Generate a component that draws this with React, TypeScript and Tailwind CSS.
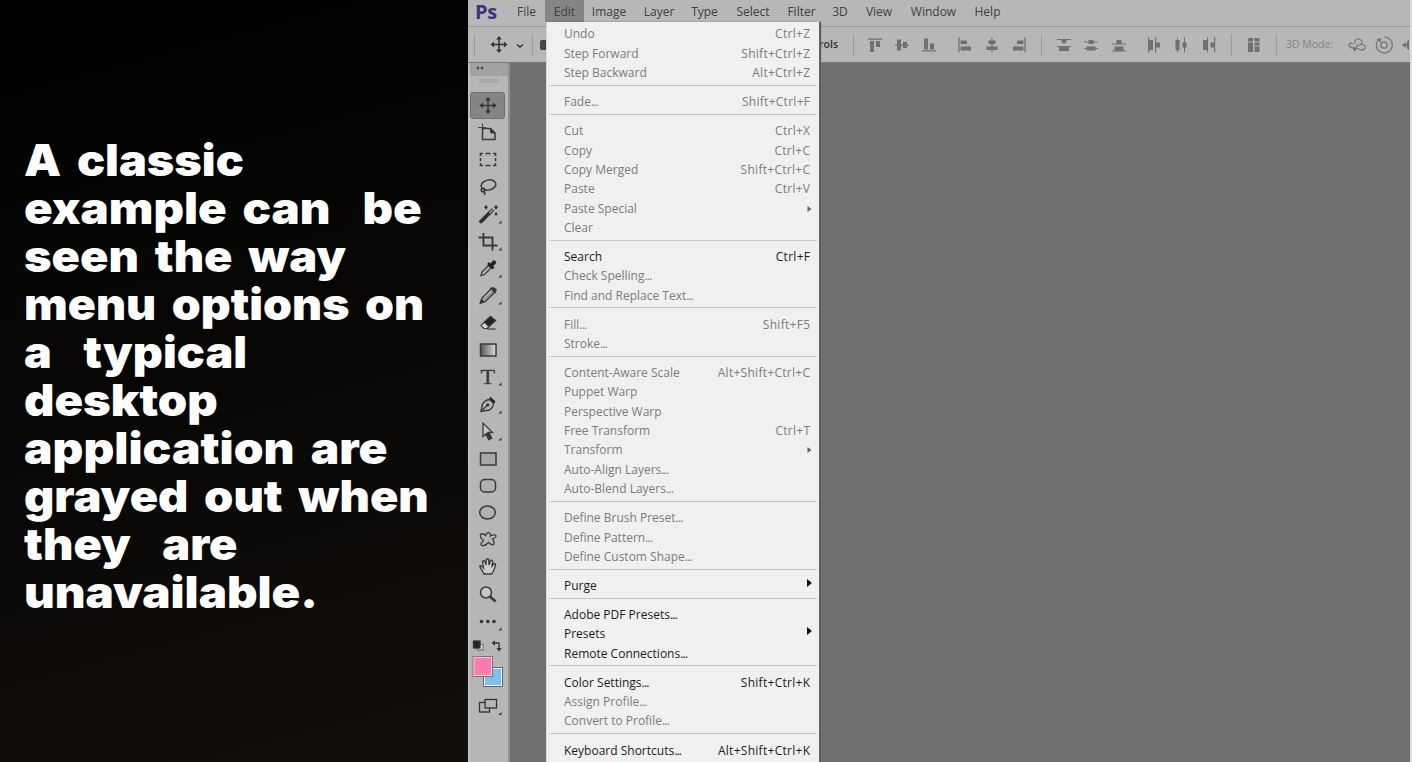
import React from "react";

type Item = { label: string; keys?: string; sub?: boolean; on?: boolean };

const GROUPS: Item[][] = [
  [
    { label: "Undo", keys: "Ctrl+Z" },
    { label: "Step Forward", keys: "Shift+Ctrl+Z" },
    { label: "Step Backward", keys: "Alt+Ctrl+Z" },
  ],
  [{ label: "Fade...", keys: "Shift+Ctrl+F" }],
  [
    { label: "Cut", keys: "Ctrl+X" },
    { label: "Copy", keys: "Ctrl+C" },
    { label: "Copy Merged", keys: "Shift+Ctrl+C" },
    { label: "Paste", keys: "Ctrl+V" },
    { label: "Paste Special", sub: true },
    { label: "Clear" },
  ],
  [
    { label: "Search", keys: "Ctrl+F", on: true },
    { label: "Check Spelling..." },
    { label: "Find and Replace Text..." },
  ],
  [{ label: "Fill...", keys: "Shift+F5" }, { label: "Stroke..." }],
  [
    { label: "Content-Aware Scale", keys: "Alt+Shift+Ctrl+C" },
    { label: "Puppet Warp" },
    { label: "Perspective Warp" },
    { label: "Free Transform", keys: "Ctrl+T" },
    { label: "Transform", sub: true },
    { label: "Auto-Align Layers..." },
    { label: "Auto-Blend Layers..." },
  ],
  [{ label: "Define Brush Preset..." }, { label: "Define Pattern..." }, { label: "Define Custom Shape..." }],
  [{ label: "Purge", sub: true, on: true }],
  [
    { label: "Adobe PDF Presets...", on: true },
    { label: "Presets", sub: true, on: true },
    { label: "Remote Connections...", on: true },
  ],
  [
    { label: "Color Settings...", keys: "Shift+Ctrl+K", on: true },
    { label: "Assign Profile..." },
    { label: "Convert to Profile..." },
  ],
  [{ label: "Keyboard Shortcuts...", keys: "Alt+Shift+Ctrl+K", on: true }],
];

const HEADING: [string, string][] = [
  ["A classic", "scale-x-[1.063]"],
  ["example can  be", "scale-x-[1.076]"],
  ["seen the way", "scale-x-[1.066]"],
  ["menu options on", "scale-x-[1.055]"],
  ["a  typical", "scale-x-[1.062]"],
  ["desktop", "scale-x-[1.072]"],
  ["application are", "scale-x-[1.087]"],
  ["grayed out when", "scale-x-[1.066]"],
  ["they  are", "scale-x-[1.065]"],
  ["unavailable.", "scale-x-[1.078]"],
];

const MENUS: [string, string][] = [
  ["File", "w-[37px]"],
  ["Edit", "w-[39px] bg-[#858585]"],
  ["Image", "w-[50px]"],
  ["Layer", "w-[50px]"],
  ["Type", "w-[41px]"],
  ["Select", "w-[56px]"],
  ["Filter", "w-[41px]"],
  ["3D", "w-[36px]"],
  ["View", "w-[42px]"],
  ["Window", "w-[67px]"],
  ["Help", "w-[41px]"],
];

function EditMenu() {
  return (
    <div className="absolute left-[78px] top-[22px] h-[740px] w-[273px] overflow-hidden border-l border-[#d8d8d8] bg-[#f0f0f0] pt-[2.2px] text-[12px] shadow-[2px_0_1px_#606060]">
      {GROUPS.map((group, g) => (
        <div key={g}>
          {g > 0 && (
            <div className="h-[9.73px] pt-[2.5px] pl-[2px] pr-[2px]">
              <div className="h-px bg-[#c8c8c8]" />
            </div>
          )}
          {group.map((item) => (
            <div
              key={item.label}
              className={
                "flex h-[19.35px] items-center justify-between pt-px pl-[17px] pr-[9px] leading-none whitespace-pre " +
                (item.on ? "text-[#1c1c1c]" : "text-[#7c7c7c]")
              }
            >
              <span>
                {item.label.endsWith("...") ? (
                  <>
                    {item.label.slice(0, -3)}
                    <span className="tracking-[-0.8px]">...</span>
                  </>
                ) : (
                  item.label
                )}
              </span>
              {item.keys && <span className="mr-[-0.3px] tracking-[0.28px]">{item.keys}</span>}
              {item.sub && (
                <svg
                  className={item.on ? "mr-[-2px] mb-[6px]" : "mr-[-2px]"}
                  width="5"
                  height="8"
                  viewBox="0 0 5 8"
                  fill={item.on ? "#111" : "#666"}
                >
                  <path d={item.on ? "M0 0L5 4L0 8Z" : "M0.5 1L4.5 4L0.5 7Z"} />
                </svg>
              )}
            </div>
          ))}
        </div>
      ))}
    </div>
  );
}

const MOVE = (
  <>
    <path d="M18 7V20M11.5 13.5H24.5" />
    <path d="M18 5l3 3.6h-6zM18 22l3-3.6h-6zM9.5 13.5l3.6-3v6zM26.500 13.5l-3.6-3v6z" fill="#333" stroke="none" />
  </>
);

const TOOLS: React.ReactNode[] = [
  MOVE,
  <>
    <path d="M12.500 9.500H20.500L25 14V20.500H12.500Z" />
    <path d="M8 8.500H16M12.500 4.500V12" strokeWidth="0.900" />
    <path d="M20 9L25.500 14.500H21L20 13Z" fill="#333" stroke="none" />
  </>,
  <path d="M10.500 10V7.500H13M15.500 7.500H20.500M23 7.500H25.500V10M25.500 12V15M25.500 17V19.500H23M20.500 19.500H15.500M13 19.500H10.500V17M10.500 15V12" />,
  <>
    <ellipse cx="18.500" cy="12" rx="7.500" ry="5" transform="rotate(-12 18.500 12)" />
    <circle cx="13" cy="17" r="1.800" />
    <path d="M13.500 18.500Q15.500 19.500 14.500 22" />
  </>,
  <>
    <path d="M11 20.500L20 11.500" strokeWidth="3.800" stroke="#2e2e2e" strokeLinecap="round" />
    <path d="M20 11.500L23 8.500" strokeWidth="3.400" stroke="#2e2e2e" />
    <path d="M19.500 12L22.500 9" strokeWidth="1.400" stroke="#b0b0b0" />
    <path d="M16 4l2 2.300l-2 2.300l-2-2.300zM26 4l2 2.300l-2 2.300l-2-2.300zM26 11l1.600 2l-1.600 2l-1.600-2z" fill="#333" stroke="none" />
  </>,
  <>
    <path d="M8.500 9.500H22.500V22.500M13.500 5V17.500H27.500" strokeWidth="1.900" />
  </>,
  <>
    <path d="M11 20.500L12 17L18.500 10.500L21 13L14.500 19.500Z" strokeWidth="1.300" />
    <path d="M17 9L19 7L20.500 8.500L22.500 6Q24 4.500 25.500 6Q27 7.500 25.500 9L23 11L24.500 12.500L22.500 14.500Z" fill="#222" stroke="none" />
  </>,
  <>
    <path d="M10.500 21L12 16L21.500 6.500Q23 5.500 24.500 7Q26 8.500 25 10L15.500 19.500Z" strokeWidth="1.300" fill="#999" />
    <path d="M13.500 16.500L22 8" strokeWidth="0.900" stroke="#ccc" />
    <path d="M21 6.500L25 10.500L26 8Q24 5 21 6.500ZM10.500 21L11.500 18L13.500 20Z" fill="#333" />
  </>,
  <>
    <path d="M11 16.500L14.500 13L19 17.500L17 19.500H14Z" fill="#ddd" strokeWidth="1.200" />
    <path d="M14.500 13L20.500 7.500L25.500 11.500L19 17.500Z" fill="#222" />
    <path d="M17 20H25.500" strokeWidth="1.200" />
  </>,
  <>
    <defs>
      <linearGradient id="toolGrad">
        <stop offset="0" stopColor="#555" />
        <stop offset="1" stopColor="#ddd" />
      </linearGradient>
    </defs>
    <rect x="10.500" y="8" width="15.500" height="12" fill="url(#toolGrad)" />
  </>,
  <text x="10.500" y="20.500" fontSize="21" fill="#3b3b3b" stroke="#3b3b3b" strokeWidth="0.300" fontFamily="Liberation Serif, serif" textLength="14.500" lengthAdjust="spacingAndGlyphs">T</text>,
  <>
    <path d="M11 20.500L12.500 13Q15 9 19.500 8.500L23.500 12Q23.500 16 19.500 19Z" strokeWidth="1.400" />
    <path d="M11 20.500L17 14.500" strokeWidth="1.200" />
    <path d="M20 5.500L25.500 10.500L24 12.500L19.500 8Z" fill="#222" stroke="none" />
    <circle cx="17.800" cy="13.800" r="1.600" fill="#333" stroke="none" />
  </>,
  <>
    <path d="M13 5V18.500L16 16L19 21.500L21.500 20L18.500 14.500H22.500Z" strokeWidth="1.300" fill="#c8c8c8" />
    <path d="M18.500 14.500L21.500 20L19 21.500L16 16Z" fill="#333" />
  </>,
  <rect x="10.500" y="8" width="15.500" height="12" fill="#a8a8a8" />,
  <rect x="10.500" y="7.500" width="15" height="12.500" rx="4" fill="#b0b0b0" />,
  <ellipse cx="17.500" cy="13.500" rx="7.800" ry="6.500" fill="#b0b0b0" />,
  <path d="M10.500 8.500Q13 6.500 15.500 9.500Q17.500 5.500 19.500 7Q21 8.500 20.500 10Q24 8 26 9.500Q26.500 11.500 22.500 13Q24.500 15 24 18Q22.500 20 18.500 16.500Q15 20.500 11.500 19.500Q10 17.500 13.500 14.500Q9.500 11.500 10.500 8.500Z" strokeWidth="1.300" />,
  <>
    <path d="M14 20.500Q10.500 15.500 9.800 13Q10.500 11.500 13.500 15L12.500 8.500Q13.500 7 15 8.500L16 12L16.300 6.500Q17.500 5 18.700 6.500L19 12L20.500 7.500Q22 6.500 22.600 8L22 13L24 10.500Q25.800 10.500 25.500 12.500L23.500 18L21.500 21H14Z" fill="#ccc" strokeWidth="1.300" />
  </>,
  <>
    <circle cx="16" cy="11.500" r="5.500" fill="#c8c8c8" />
    <path d="M20 15.500L25.500 20.500" strokeWidth="2.600" />
  </>,
  <>
    <circle cx="11.500" cy="13.500" r="1.800" fill="#333" stroke="none" />
    <circle cx="17.800" cy="13.500" r="1.800" fill="#333" stroke="none" />
    <circle cx="24" cy="13.500" r="1.800" fill="#333" stroke="none" />
  </>,
];

const FLYOUT = [4, 5, 6, 7, 10, 11, 12, 19];

function Toolbar() {
  return (
    <div className="flex w-[42px] shrink-0 flex-col border-l-2 border-r-2 border-l-[#c2c2c2] border-r-[#909090] bg-[#b6b6b6]">
      <div className="h-[13px] shrink-0 bg-[#a2a2a2] pl-[6px]">
        <svg width="8" height="12" viewBox="0 0 8 12" fill="#444">
          <path d="M0 5L3 3V7ZM4 5L7 3V7Z" />
        </svg>
      </div>
      <div className="flex h-[16px] shrink-0 justify-center pt-[3px]">
        <div className="h-[4px] w-[20px] bg-[#aaaaaa]" />
      </div>
      {TOOLS.map((tool, i) => (
        <div key={i} className="flex h-[27.15px] shrink-0 items-center">
          <div className={i === 0 ? "h-[27px] w-[35px] rounded-[3px] border border-[#707070] bg-[#858585]" : "h-[27px] w-[35px]"}>
            <svg
              className={i === 0 ? "mt-[-1px] ml-[-1px] overflow-visible" : "overflow-visible"}
              width="36"
              height="27"
              viewBox="0 0 36 27"
              fill="none"
              stroke="#3a3a3a"
              strokeWidth="1.500"
            >
              {tool}
              {FLYOUT.includes(i) && <path d="M31.500 19.500V22.500H28.500Z" fill="#333" stroke="none" />}
            </svg>
          </div>
        </div>
      ))}
      <svg className="shrink-0" width="38" height="86" viewBox="0 0 38 86" fill="none" stroke="#333" strokeWidth="1.300">
        <rect x="7.500" y="9.500" width="5.500" height="5.500" fill="#eee" stroke="#777" />
        <rect x="3.500" y="6" width="6.500" height="7" fill="#222" />
        <path d="M24.500 8H29V14" />
        <path d="M21.500 8L25 5.300V10.700ZM29 16.500L26.300 13H31.700Z" fill="#333" stroke="none" />
        <rect x="13.500" y="32.500" width="19" height="19" fill="#7dbfee" stroke="#666" strokeWidth="1" />
        <rect x="14.500" y="33.500" width="17" height="17" stroke="#f2f2f2" strokeWidth="1" />
        <rect x="3" y="21.500" width="19.500" height="20" fill="#fc7cb0" stroke="#777" strokeWidth="1" />
        <rect x="4" y="22.500" width="17.500" height="18" stroke="#f7c4d8" strokeWidth="1" />
        <rect x="9.500" y="67.500" width="10" height="9.500" />
        <rect x="15" y="64.500" width="11.500" height="8.500" fill="#b6b6b6" />
        <path d="M31.500 77V80H28.500Z" fill="#333" stroke="none" />
      </svg>
    </div>
  );
}

function Opt({ cls, children }: { cls: string; children: React.ReactNode }) {
  return (
    <div className={"flex shrink-0 items-center justify-center " + cls}>
      <svg className="shrink-0" width="18" height="18" viewBox="0 0 18 18" fill="#707070" stroke="#757575" strokeWidth="0">
        {children}
      </svg>
    </div>
  );
}

const Bar = () => <div className="h-[22px] w-px shrink-0 bg-[#9c9c9c]" />;

function OptionsBar() {
  return (
    <div className="flex h-[36px] shrink-0 items-center overflow-hidden border-t border-[#9c9c9c] bg-[#b7b7b7]">
      <div className="w-[6px] shrink-0" />
      <Bar />
      <div className="flex w-[57px] shrink-0 items-center pl-[6px]">
        <svg width="36" height="27" viewBox="0 0 36 27" stroke="#333" strokeWidth="1.500" fill="none">
          {MOVE}
        </svg>
        <svg className="ml-[-1px] mt-[2px]" width="8" height="6" viewBox="0 0 8 6" stroke="#333" strokeWidth="1.500" fill="none">
          <path d="M1 1.500L4 4L7 1.500" />
        </svg>
      </div>
      <Bar />
      <div className="ml-[7px] h-[10px] w-[10px] shrink-0 rounded-[2px] bg-[#444444]" />
      <div className="w-[288px] shrink-0 text-right text-[10.5px] font-semibold text-[#333333]">rols</div>
      <div className="w-[15px] shrink-0" />
      <Bar />
      <Opt cls="ml-[7px] w-[27px]"><path d="M2 2.500H16V3.800H2ZM4 5H8V16H4ZM10 5H14V11H10Z" /></Opt>
      <Opt cls="w-[27px]"><path d="M2 8.500H16V9.700H2ZM4 3.500H8V14.500H4ZM10 6H14V12H10Z" /></Opt>
      <Opt cls="w-[28px]"><path d="M2 14.300H16V15.600H2ZM4 2.500H8V13.500H4ZM10 7.500H14V13.500H10Z" /></Opt>
      <Opt cls="ml-[8px] w-[27px]"><path d="M2.300 1.500H3.600V16.500H2.300ZM4.500 4.500H11V8H4.500ZM4.500 10.500H15V14.500H4.500Z" /></Opt>
      <Opt cls="w-[27px]"><path d="M8.400 1.500H9.600V16.500H8.400ZM5.500 4.500H12.500V8H5.500ZM3.500 10.500H14.500V14H3.500Z" /></Opt>
      <Opt cls="w-[27px]"><path d="M14.400 1.500H15.700V16.500H14.400ZM7 4.500H13.500V8H7ZM3 10.500H13.500V14.500H3Z" /></Opt>
      <div className="w-[9px] shrink-0" />
      <Bar />
      <Opt cls="ml-[8px] w-[27px]"><path d="M2 3H16V4H2ZM6 4H12L10.500 7.500H7.500ZM2 10H16V11H2ZM4 11H14V15H4Z" /></Opt>
      <Opt cls="w-[28px]"><path d="M2 5.500H16V6.500H2ZM6.500 4H11.500V8H6.500ZM2 12H16V13H2ZM4.500 10.500H13.500V14.500H4.500Z" /></Opt>
      <Opt cls="w-[27px]"><path d="M2 7.500H16V8.500H2ZM6.500 4H11.500V8H6.500ZM2 14.500H16V15.500H2ZM4.500 10.500H13.500V14.500H4.500Z" /></Opt>
      <Opt cls="ml-[8px] w-[27px]"><path d="M3 1.500H4.200V16.500H3ZM4 4H8V14H4ZM10 1.500H11.200V16.500H10ZM11 6.500H15V11.500H11Z" /></Opt>
      <Opt cls="w-[28px]"><path d="M5 1.500H6V16.500H5ZM3.500 4H7.500V14H3.500ZM12 1.500H13V16.500H12ZM10.500 6.500H14.500V11.500H10.500Z" /></Opt>
      <Opt cls="w-[27px]"><path d="M7 1.500H8V16.500H7ZM3 4H7V14H3ZM14 1.500H15.200V16.500H14ZM10.500 6.500H14.500V11.500H10.500Z" /></Opt>
      <div className="w-[9px] shrink-0" />
      <Bar />
      <Opt cls="w-[44px]"><path d="M3 2H8V5.500H3ZM9.500 2H14.500V5.500H9.500ZM3 6.500H8V16H3ZM9.500 6.500H14.500V9.500H9.500ZM9.500 10.500H14.500V16H9.500Z" /></Opt>
      <Bar />
      <div className="w-[67px] shrink-0 pl-[9px] text-[10.5px] whitespace-nowrap text-[#858585]">3D Mode:</div>
      <Opt cls="w-[26px]">
        <path d="M5 8Q1 6 1 9Q3 13 8 12L13 14Q18 14 17 10Q15 7 9 10L6 14M7 8Q6 3 10 3Q14 3 14 7Q13 10 9 9" fill="none" strokeWidth="1.200" />
        <path d="M4 11L9 12L6.500 16Z" />
      </Opt>
      <Opt cls="w-[28px]">
        <circle cx="9" cy="9" r="3.200" fill="none" strokeWidth="1.300" />
        <path d="M4 3A8 8 0 1 0 9 1" fill="none" strokeWidth="1.200" />
        <path d="M1.500 3.500L6 2L5.500 6.500Z" />
      </Opt>
      <svg className="ml-[4px] shrink-0" width="7" height="14" viewBox="0 0 7 14" fill="#707070">
        <path d="M0 7L3.500 4V6H5V3.500L7 1.500V12.500L5 10.500V8H3.500V10Z" />
      </svg>
    </div>
  );
}

export default function App() {
  return (
    <div className="flex h-[762px] w-[1412px] overflow-hidden bg-black font-['Open_Sans',sans-serif]">
      <div className="h-full w-[468px] shrink-0 bg-linear-[165deg,#000000_0%,#080706_50%,#130f0c_100%] pt-[136px] pl-[24px] font-['Inter',sans-serif] text-[44px] leading-[48px] font-black text-white [word-spacing:6px]">
        {HEADING.map(([line, cls]) => (
          <div key={line} className={"origin-left whitespace-pre " + cls}>{line}</div>
        ))}
      </div>
      <div className="relative flex h-full w-[942px] shrink-0 flex-col bg-[#707070]">
        <div className="flex h-[26px] shrink-0 items-start bg-[#b7b7b7] text-[12px] text-[#404040]">
          <div className="w-[40px] pl-[7px] text-[20px] leading-[23px] font-bold tracking-[-0.2px] text-[#40327f]">Ps</div>
          {MENUS.map(([name, cls]) => (
            <div key={name} className={"flex h-[22px] shrink-0 items-center justify-center pt-px " + cls}>{name}</div>
          ))}
        </div>
        <OptionsBar />
        <div className="flex min-h-0 flex-1 overflow-hidden border-t border-[#777777]">
          <Toolbar />
          <div className="flex-1 bg-[#707070]" />
        </div>
        <EditMenu />
      </div>
      <div className="flex-1 bg-[#dcdcdc]" />
    </div>
  );
}
